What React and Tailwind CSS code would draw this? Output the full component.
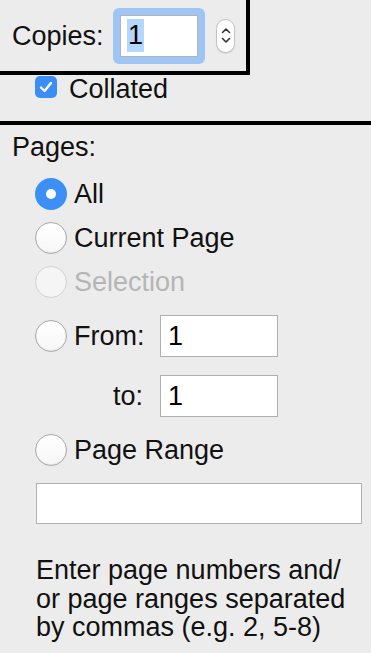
import { useState } from 'react'

const font = { fontFamily: '"Liberation Sans", Arial, sans-serif' }

const Radio = ({ checked, disabled }) => {
    if (checked) {
        return (
            <span className="flex h-[32px] w-[32px] shrink-0 items-center justify-center rounded-full bg-[#3b8ff7]">
                <span className="h-[10px] w-[10px] rounded-full bg-white" />
            </span>
        )
    }
    return (
        <span
            className={
                disabled
                    ? 'h-[32px] w-[32px] shrink-0 rounded-full border border-[#d2d2d2] bg-[#f5f5f5]'
                    : 'h-[32px] w-[32px] shrink-0 rounded-full border border-[#a8a8a8] bg-gradient-to-b from-white to-[#f7f7f7] shadow-[inset_0_-1px_1px_rgba(0,0,0,0.06)]'
            }
        />
    )
}

const Field = ({ value, className }) => (
    <div className={`flex items-center border border-[#b0b0b0] bg-white pl-[7px] text-black ${className}`}>
        {value}
    </div>
)

export default function App() {
    const [selected] = useState('all')

    return (
        <div className="h-[653px] w-[371px] overflow-hidden bg-[#ececec] text-[27px] leading-[32px] text-[#111]" style={font}>
            {/* copies box */}
            <div className="flex h-[75px] w-[250px] items-center border-r-4 border-b-4 border-black pl-[12px]">
                <span className="w-[101px]">Copies:</span>
                <div className="flex h-[56px] w-[92px] items-center justify-center rounded-[6px] bg-[#9ec5f4]">
                    <div className="flex h-[42px] w-[78px] items-center border border-[#b4b4b4] bg-white pl-[6px]">
                        <span className="bg-[#b3d7ff] px-[1px] leading-[33px] text-black">1</span>
                    </div>
                </div>
                <div className="ml-[11px] flex h-[34px] w-[19px] flex-col items-center justify-center gap-[3px] rounded-full border border-[#c2c2c2] bg-white shadow-[0_1px_1px_rgba(0,0,0,0.1)]">
                    <svg width="10" height="7" viewBox="0 0 10 7" fill="none" stroke="#333" strokeWidth="1.6" strokeLinecap="round" strokeLinejoin="round">
                        <path d="M1.5 5.5 5 2l3.5 3.5" />
                    </svg>
                    <svg width="10" height="7" viewBox="0 0 10 7" fill="none" stroke="#333" strokeWidth="1.6" strokeLinecap="round" strokeLinejoin="round">
                        <path d="M1.5 1.5 5 5l3.5-3.5" />
                    </svg>
                </div>
            </div>

            {/* collated */}
            <div className="flex h-[24px] items-center gap-[12px] pl-[35px]">
                <span className="flex h-[22px] w-[22px] items-center justify-center rounded-[5px] bg-[#3b8ef6]">
                    <svg width="14" height="12" viewBox="0 0 14 12" fill="none" stroke="white" strokeWidth="2.4" strokeLinecap="round" strokeLinejoin="round">
                        <path d="M2 6.5 5.5 10 12 2" />
                    </svg>
                </span>
                <span className="pt-[3px]">Collated</span>
            </div>

            <div className="mt-[22px] h-[4px] w-full bg-black" />

            {/* pages */}
            <div className="mt-[6px] pl-[12px]">Pages:</div>

            <div className="mt-[15px] flex flex-col pl-[35px]">
                <label className="flex h-[32px] items-center gap-[7px]">
                    <Radio checked={selected === 'all'} />
                    <span>All</span>
                </label>
                <label className="mt-[12px] flex h-[32px] items-center gap-[7px]">
                    <Radio checked={selected === 'current'} />
                    <span>Current Page</span>
                </label>
                <label className="mt-[12px] flex h-[32px] items-center gap-[7px] text-[#b5b5b5]">
                    <Radio disabled />
                    <span>Selection</span>
                </label>

                <div className="mt-[17px] flex h-[42px] items-center">
                    <Radio checked={selected === 'from'} />
                    <span className="ml-[7px] w-[86px]">From:</span>
                    <Field value="1" className="h-[42px] w-[118px]" />
                </div>
                <div className="mt-[18px] flex h-[42px] items-center">
                    <span className="w-[125px] pr-[17px] text-right">to:</span>
                    <Field value="1" className="h-[42px] w-[118px]" />
                </div>

                <label className="mt-[17px] flex h-[32px] items-center gap-[7px]">
                    <Radio checked={selected === 'range'} />
                    <span>Page Range</span>
                </label>
            </div>

            <div className="mt-[17px] pl-[36px]">
                <Field value="" className="h-[41px] w-[326px]" />
            </div>

            <p className="mt-[32px] whitespace-nowrap pl-[36px] leading-[28.5px]">
                Enter page numbers and/
                <br />
                or page ranges separated
                <br />
                by commas (e.g. 2, 5-8)
            </p>
        </div>
    )
}
